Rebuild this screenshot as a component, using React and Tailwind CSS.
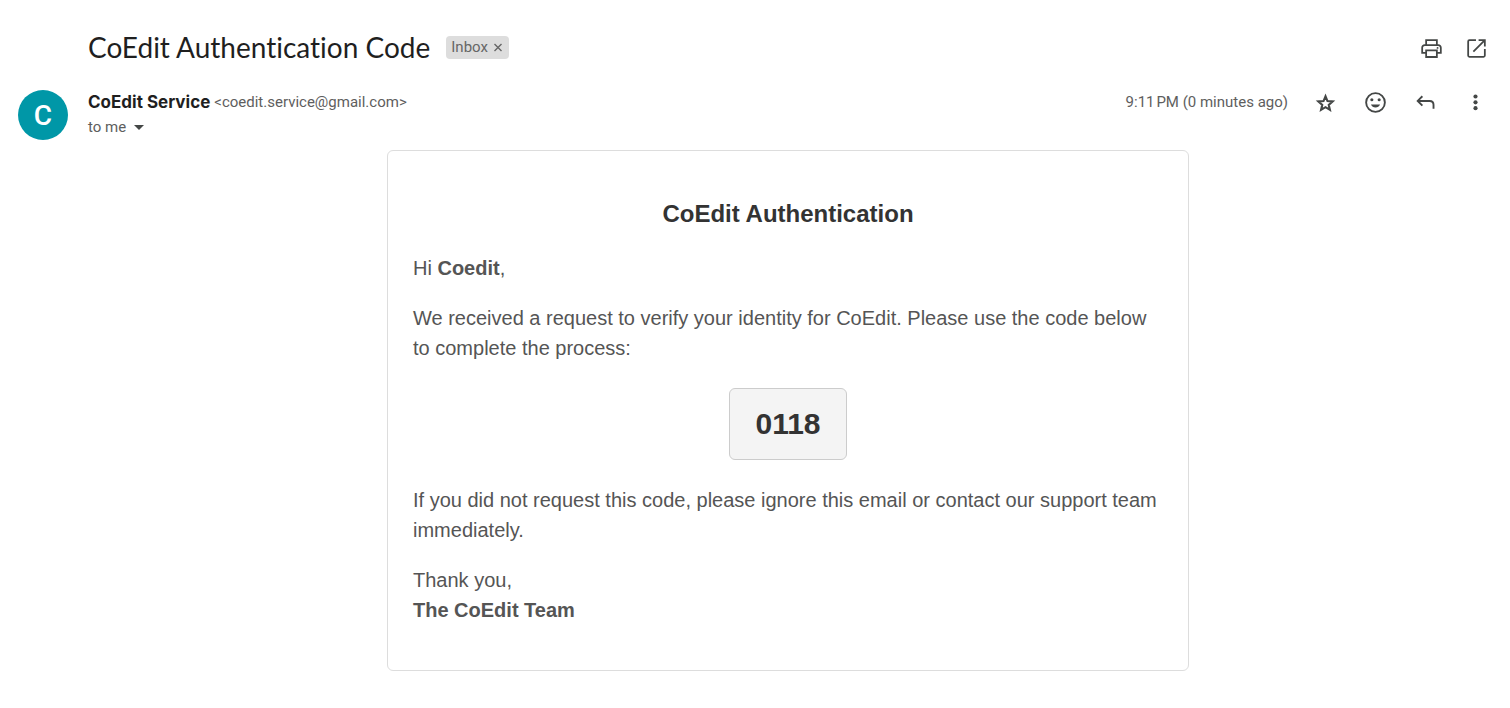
function PrintIcon() {
  return (
    <svg viewBox="0 0 24 24" className="size-[25px]" fill="currentColor" aria-hidden="true">
      <path d="M18.5 8H18V3H6v5h-.5C3.6 8 2.200 9.400 2.200 11.300V17H6v4h12v-4h3.800v-5.700C21.800 9.400 20.400 8 18.500 8zM7.700 4.700h8.600V8H7.700V4.700zm8.600 14.600H7.700v-4.600h8.600v4.600zM20.100 15.300H18V13H6v2.300H3.900v-4c0-.9.7-1.600 1.600-1.600h13c.9 0 1.600.7 1.600 1.600v4z" />
      <circle cx="17.800" cy="11.400" r="0.900" />
    </svg>
  );
}

function OpenIcon() {
  return (
    <svg viewBox="0 0 24 24" className="size-[25px]" fill="none" stroke="currentColor" strokeWidth="1.700" aria-hidden="true">
      <path d="M11.500 4H5.200C4.500 4 4 4.500 4 5.200v13.600c0 .7.500 1.200 1.200 1.200h13.600c.7 0 1.200-.5 1.200-1.200v-6.300" />
      <path d="M14 4h6v6M20 4L9 15" />
    </svg>
  );
}

function StarIcon() {
  return (
    <svg viewBox="0 0 24 24" className="size-[25px]" fill="none" stroke="currentColor" strokeWidth="2" aria-hidden="true">
      <path d="M12 6l1.900 4.600 5 .4-3.800 3.250 1.150 4.850L12 16.500l-4.250 2.600L8.900 14.250 5.100 11l5-.4z" />
    </svg>
  );
}

function SmileIcon() {
  return (
    <svg viewBox="0 0 24 24" className="size-[25px]" fill="currentColor" aria-hidden="true">
      <circle cx="12" cy="12" r="9" fill="none" stroke="currentColor" strokeWidth="1.800" />
      <circle cx="8.500" cy="9.300" r="1.500" />
      <circle cx="15.500" cy="9.300" r="1.500" />
      <path d="M7.600 14h8.800c-.8 1.800-2.400 2.900-4.400 2.900S8.400 15.800 7.600 14z" />
    </svg>
  );
}

function ReplyIcon() {
  return (
    <svg viewBox="0 0 24 24" className="size-[25px]" fill="none" stroke="currentColor" strokeWidth="1.800" aria-hidden="true">
      <path d="M9 6L4.500 10.500 9 15M4.700 10.500H16c2.300 0 3.700 1.500 3.700 3.700V18" />
    </svg>
  );
}

function MoreIcon() {
  return (
    <svg viewBox="0 0 24 24" className="size-[25px]" fill="currentColor" aria-hidden="true">
      <circle cx="12" cy="6.200" r="2" />
      <circle cx="12" cy="11.800" r="2" />
      <circle cx="12" cy="17.400" r="2" />
    </svg>
  );
}

const messageActions = [
  { label: "Star", Icon: StarIcon },
  { label: "Add reaction", Icon: SmileIcon },
  { label: "Reply", Icon: ReplyIcon },
  { label: "More", Icon: MoreIcon },
];

export default function App() {
  return (
    <main className="min-h-screen bg-white pb-9 font-[Roboto,sans-serif] text-[#5e5e5e]">
      <header className="flex items-center justify-between pt-[23px] pr-[11px] pl-[88px]">
        <div className="flex items-center gap-4 pb-0.5">
          <h1 className="font-[Lato,sans-serif] text-[28px] leading-[48px] text-[#1f1f1f] [font-variant-ligatures:none]">
            CoEdit Authentication Code
          </h1>
          <span className="flex h-[23px] items-center gap-1 rounded bg-[#ddd] px-[5px] text-[15px] text-[#666]">
            Inbox
            <button type="button" aria-label="Remove label Inbox" className="flex">
              <svg viewBox="0 0 12 12" className="size-3" fill="none" stroke="currentColor" strokeWidth="1.400" aria-hidden="true">
                <path d="M2.500 3l7 7M9.500 3l-7 7" />
              </svg>
            </button>
          </span>
        </div>
        <div className="flex text-[#444746]">
          <button type="button" aria-label="Print all" className="flex size-[45px] items-center justify-center">
            <PrintIcon />
          </button>
          <button type="button" aria-label="In new window" className="flex size-[45px] items-center justify-center">
            <OpenIcon />
          </button>
        </div>
      </header>

      <section className="flex items-start pt-[17px] pr-[10px] pl-[18px]">
        <div className="flex size-[50px] shrink-0 items-center justify-center rounded-full bg-[#0097a7] pt-0.5 text-[28px] font-medium text-white">
          C
        </div>
        <div className="ml-5 flex-1">
          <div className="flex items-center gap-1 leading-6">
            <span className="font-[Inter,sans-serif] text-[17px] font-bold text-[#1f1f1f]">
              CoEdit Service
            </span>
            <span className="text-[15px]">&lt;coedit.service@gmail.com&gt;</span>
          </div>
          <button type="button" className="flex items-center gap-2 text-[15px] leading-[26px]">
            to me
            <svg viewBox="0 0 10 5" className="h-[5px] w-[10px]" fill="#444746" aria-hidden="true">
              <path d="M0 0h10L5 5z" />
            </svg>
          </button>
        </div>
        <div className="flex h-6 items-center">
          <time className="mr-3 text-[15px]">9:11{"\u202f"}PM (0 minutes ago)</time>
          {messageActions.map(({ label, Icon }) => (
            <button
              key={label}
              type="button"
              aria-label={label}
              className="flex size-[50px] items-center justify-center pt-px text-[#444746]"
            >
              <Icon />
            </button>
          ))}
        </div>
      </section>

      <div className="pt-[10px] pr-[22px] pl-[88px]">
        <article className="mx-auto flex max-w-[802px] flex-col gap-5 rounded-md border border-[#ddd] px-[25px] py-[45px] font-['Liberation_Sans',Arial,sans-serif] text-[20px] leading-[30px] text-[#555]">
          <h2 className="pb-0.5 text-center text-[24px] leading-[35px] font-bold text-[#333]">
            CoEdit Authentication
          </h2>
          <p>
            Hi <strong>Coedit</strong>,
          </p>
          <p>
            We received a request to verify your identity for CoEdit. Please use the code below to
            complete the process:
          </p>
          <div className="flex justify-center py-[5px]">
            <span className="rounded-md border border-[#ccc] bg-[#f4f4f4] px-[25px] py-3 text-[30px] leading-[46px] font-bold text-[#333]">
              0118
            </span>
          </div>
          <p>
            If you did not request this code, please ignore this email or contact our support team
            immediately.
          </p>
          <p>
            Thank you,
            <br />
            <strong>The CoEdit Team</strong>
          </p>
        </article>
      </div>
    </main>
  );
}
